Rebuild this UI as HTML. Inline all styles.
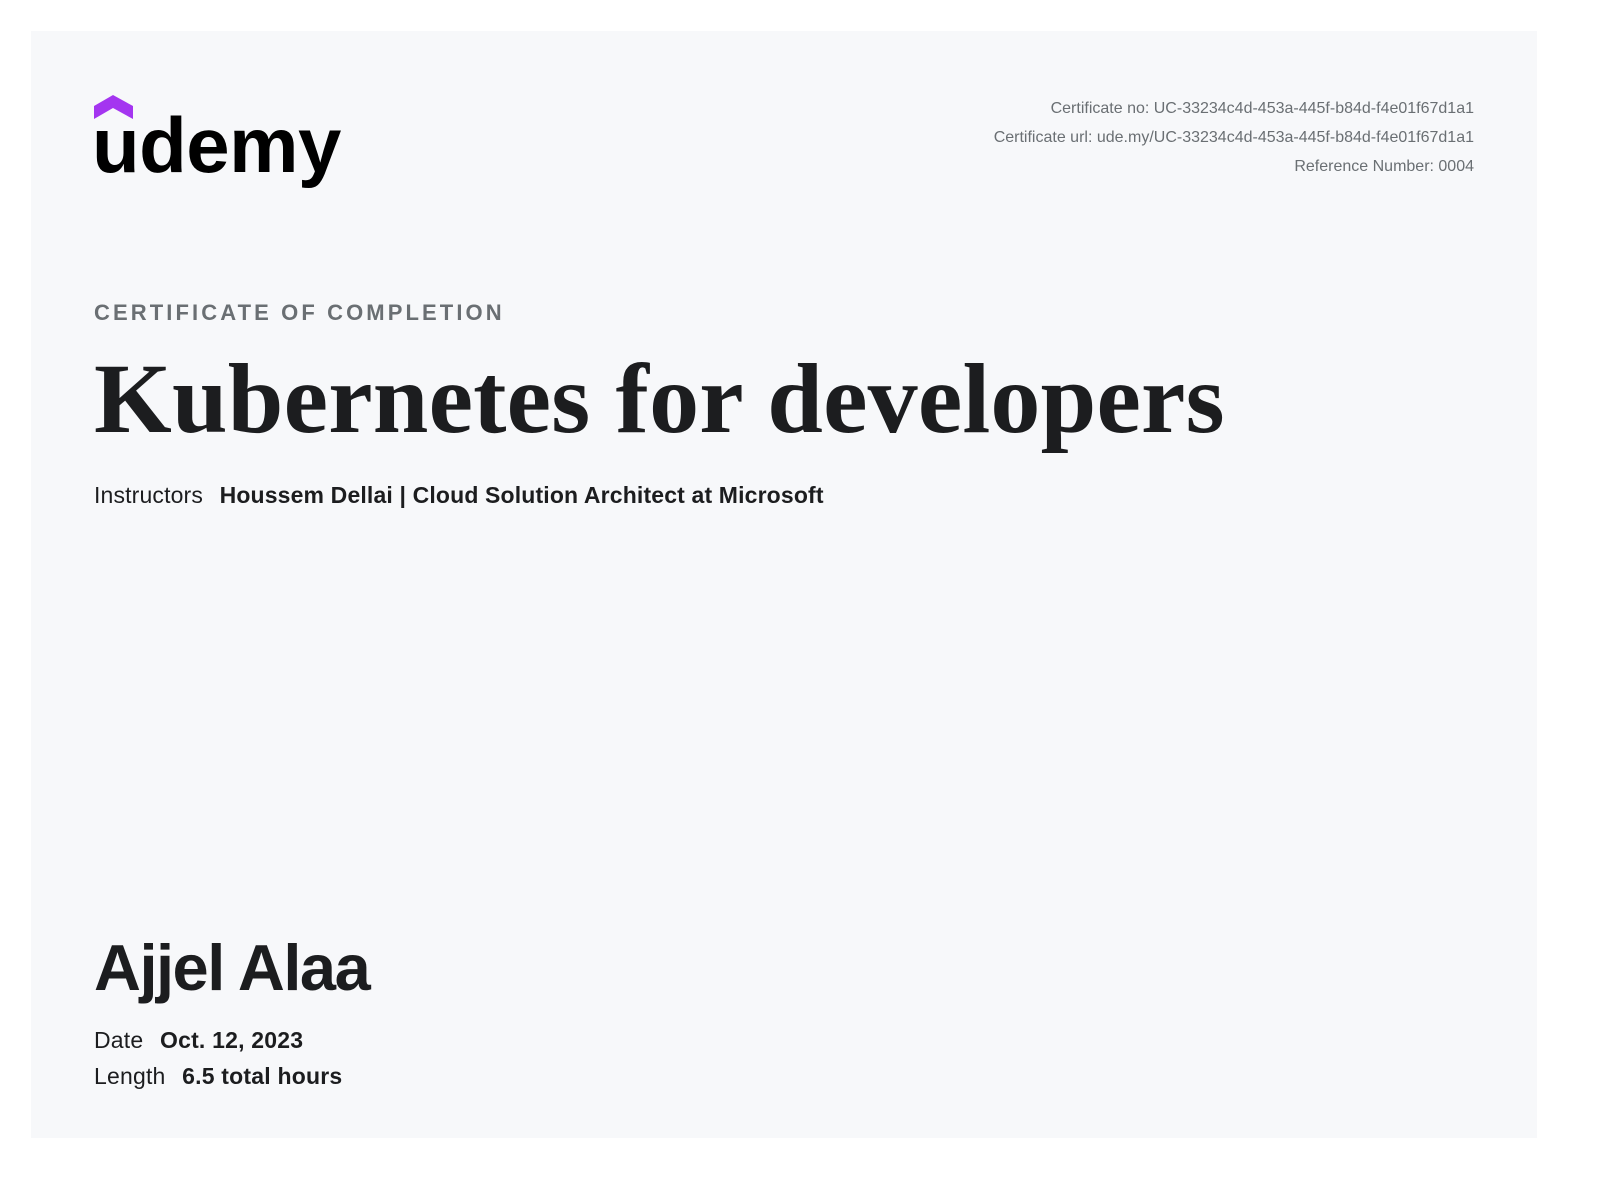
<!DOCTYPE html>
<html><head><meta charset="utf-8"><style>
body{margin:0;width:1600px;height:1190px;background:#fff;position:relative;overflow:hidden;font-family:"Liberation Sans",sans-serif;color:#1c1d1f}
.card{position:absolute;left:31px;top:31px;width:1506px;height:1107px;background:#f7f8fa}
.a{position:absolute;white-space:nowrap;line-height:1}
</style></head><body>
<div class="card"></div>
<svg class="a" style="left:90px;top:92px" width="270" height="110" viewBox="0 0 270 110">
<polygon points="4,14 23,3 43,14 43,27 23,16 4,27" fill="#a435f0"/>
<text x="2" y="80" font-family="Liberation Sans" font-weight="bold" font-size="78" letter-spacing="-0.5" fill="#000">udemy</text>
</svg>
<div class="a" style="right:126px;top:101px;font-size:16px;color:#6a6f73">Certificate no: UC-33234c4d-453a-445f-b84d-f4e01f67d1a1</div>
<div class="a" style="right:126px;top:130px;font-size:16px;color:#6a6f73">Certificate url: ude.my/UC-33234c4d-453a-445f-b84d-f4e01f67d1a1</div>
<div class="a" style="right:126px;top:159px;font-size:16px;color:#6a6f73">Reference Number: 0004</div>
<div class="a" style="left:94px;top:302px;font-size:22px;font-weight:bold;letter-spacing:3.1px;color:#6a6f73">CERTIFICATE OF COMPLETION</div>
<div class="a" style="left:94px;top:349px;font-family:'Liberation Serif',serif;font-weight:bold;font-size:100px;letter-spacing:0.2px;color:#1c1d1f">Kubernetes for developers</div>
<div class="a" style="left:94px;top:484px;font-size:23px;letter-spacing:0.15px">Instructors <b style="margin-left:10px">Houssem Dellai | Cloud Solution Architect at Microsoft</b></div>
<div class="a" style="left:94px;top:935px;font-size:65px;font-weight:bold;letter-spacing:-1.5px">Ajjel Alaa</div>
<div class="a" style="left:94px;top:1029px;font-size:23px;letter-spacing:0.2px">Date <b style="margin-left:10px">Oct. 12, 2023</b></div>
<div class="a" style="left:94px;top:1065px;font-size:23px;letter-spacing:0.2px">Length <b style="margin-left:10px">6.5 total hours</b></div>
</body></html>
